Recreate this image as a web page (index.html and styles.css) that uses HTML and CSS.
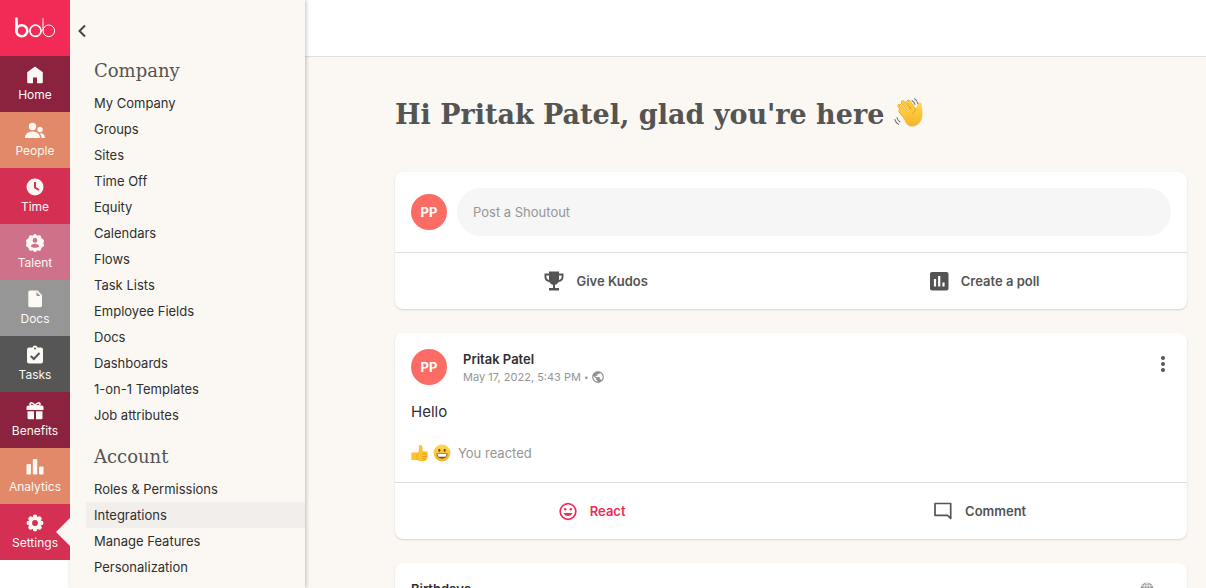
FILE: index.html
```html
<!DOCTYPE html>
<html lang="en">
<head>
  <meta charset="UTF-8">
  <meta name="viewport" content="width=device-width, initial-scale=1.0">
  <title>Home | bob</title>
  <link rel="stylesheet" href="styles.css">
</head>
<body>
  <div class="app">
    <nav class="rail" aria-label="Main">
      <a href="#" class="logo" aria-label="bob">
        <svg width="42" height="22" viewBox="0 0 42 22" fill="none" stroke="#fff">
          <path d="M2.500 1.500v12" stroke-width="2.600" stroke-linecap="round"/>
          <circle cx="7.800" cy="13.800" r="5.500" stroke-width="2.600"/>
          <circle cx="21.500" cy="13.800" r="5.600" stroke-width="1.700"/>
          <circle cx="34.800" cy="13.800" r="5.800" stroke-width="1"/>
          <path d="M29 1.500v12.300" stroke-width="1" stroke-linecap="round"/>
        </svg>
      </a>
      <a href="#" class="rail-item wine">
        <svg viewBox="0 0 20 20"><path d="M10 1.500 2.200 7.200V17q0 1.200 1.200 1.200H8V12.500h4v5.700h4.600q1.200 0 1.200-1.200V7.200z"/></svg>
        <span>Home</span>
      </a>
      <a href="#" class="rail-item orange">
        <svg viewBox="0 0 20 20"><circle cx="7.500" cy="5.500" r="3.700"/><path d="M0 17c0-4 3-6.500 7.500-6.500S15 13 15 17z"/><circle cx="15" cy="8.500" r="2.700"/><path d="M14.500 12.200c3.500-.4 5.500 1.600 5.500 4.800h-3.500c0-2-.7-3.600-2-4.800z"/></svg>
        <span>People</span>
      </a>
      <a href="#" class="rail-item red">
        <svg viewBox="0 0 20 20"><circle cx="10" cy="10" r="8.500"/><path class="cut" d="M10 5v5.500l4 2.500"/></svg>
        <span>Time</span>
      </a>
      <a href="#" class="rail-item pink">
        <svg viewBox="0 0 20 20"><path d="M10 1.200 12.300 3l2.900-.2.900 2.700 2.500 1.600L17.900 10l.7 2.900-2.500 1.600-.9 2.700-2.900-.2-2.300 1.800L7.700 17l-2.900.2-.9-2.700-2.500-1.600.7-2.900-.7-2.900 2.500-1.600.9-2.700 2.900.2z" stroke="#fcf8f3" stroke-linejoin="round"/><circle cx="10" cy="7.400" r="2.300" class="hole"/><path class="hole" d="M5.800 13.500c.4-1.800 2-2.700 4.200-2.700s3.800.9 4.200 2.700c-2.400 1.800-6 1.800-8.400 0z"/></svg>
        <span>Talent</span>
      </a>
      <a href="#" class="rail-item gray">
        <svg viewBox="0 0 20 20"><path d="M5 1.500h7.500l4.500 4.500v10.500q0 1.700-1.700 1.700H5q-1.700 0-1.700-1.700v-13.300Q3.300 1.500 5 1.500z"/><path class="hole" d="M11.500 3v4h4z"/></svg>
        <span>Docs</span>
      </a>
      <a href="#" class="rail-item dark">
        <svg viewBox="0 0 20 20"><rect x="2" y="2.500" width="16" height="16" rx="2"/><circle cx="10" cy="3" r="2.500"/><circle cx="10" cy="3.500" r="1" class="hole"/><path class="cut" d="m5.800 11 3 3 5.700-6"/></svg>
        <span>Tasks</span>
      </a>
      <a href="#" class="rail-item wine">
        <svg viewBox="0 0 20 20"><path d="M3 4.500h14q1.500 0 1.500 1.500v3h-17V6q0-1.500 1.500-1.500zM2.500 10.200H9v8H4q-1.500 0-1.500-1.500zM11 10.200h6.500v6.500q0 1.500-1.500 1.500h-5z"/><path d="M10 5C9 1.500 4.500.800 5 3.500 5.200 5 7.500 5 10 5c2.500 0 4.800 0 5-1.500.5-2.700-4-2-5 1.500z" fill="none" stroke="#fcf8f3" stroke-width="1.600"/></svg>
        <span>Benefits</span>
      </a>
      <a href="#" class="rail-item orange">
        <svg viewBox="0 0 20 20"><rect x="1.500" y="7" width="4.500" height="10.500" rx="1"/><rect x="7.800" y="2" width="4.500" height="15.500" rx="1"/><rect x="14" y="9.500" width="4.500" height="8" rx="1"/></svg>
        <span>Analytics</span>
      </a>
      <a href="#" class="rail-item red active">
        <svg viewBox="0 0 20 20"><g stroke="#fcf8f3" stroke-width="4.600" stroke-linecap="round"><path d="M10 3.800v12.400M3.800 10h12.400M5.600 5.600l8.800 8.800M14.400 5.600l-8.800 8.800"/></g><circle cx="10" cy="10" r="2.900" class="hole"/></svg>
        <span>Settings</span>
      </a>
    </nav>

    <aside class="panel">
      <button type="button" class="collapse-btn" aria-label="Collapse menu">
        <svg width="8" height="14" viewBox="0 0 8 14"><path d="M7 1.500 1.500 7 7 12.500" fill="none" stroke="#444" stroke-width="2"/></svg>
      </button>
      <section class="menu-group">
        <h2>Company</h2>
        <ul>
          <li><a href="#">My Company</a></li>
          <li><a href="#">Groups</a></li>
          <li><a href="#">Sites</a></li>
          <li><a href="#">Time Off</a></li>
          <li><a href="#">Equity</a></li>
          <li><a href="#">Calendars</a></li>
          <li><a href="#">Flows</a></li>
          <li><a href="#">Task Lists</a></li>
          <li><a href="#">Employee Fields</a></li>
          <li><a href="#">Docs</a></li>
          <li><a href="#">Dashboards</a></li>
          <li><a href="#">1-on-1 Templates</a></li>
          <li><a href="#">Job attributes</a></li>
        </ul>
      </section>
      <section class="menu-group">
        <h2>Account</h2>
        <ul>
          <li><a href="#">Roles &amp; Permissions</a></li>
          <li><a href="#" class="selected">Integrations</a></li>
          <li><a href="#">Manage Features</a></li>
          <li><a href="#">Personalization</a></li>
        </ul>
      </section>
    </aside>

    <div class="page">
      <header class="topbar"></header>
      <main class="feed">
        <h1 class="greeting">Hi Pritak Patel, glad you're here
          <!-- waving hand -->
          <svg class="wave" width="30" height="30" viewBox="0 0 30 30" role="img" aria-label="Waving hand">
            <defs>
              <linearGradient id="skin" x1="0" y1="0" x2="0" y2="1"><stop offset="0" stop-color="#ffd84d"/><stop offset="1" stop-color="#f5b32a"/></linearGradient>
            </defs>
            <!-- fingers, then palm with the thumb -->
            <path d="m6.500 13 7 8M5.500 8l9 10.500M9 4.500l9 11M14.500 4l6.500 9" fill="none" stroke="#e0981f" stroke-width="4.200" stroke-linecap="round"/>
            <path d="m6.500 13 7 8M5.500 8l9 10.500M9 4.500l9 11M14.500 4l6.500 9" fill="none" stroke="#fdcb3c" stroke-width="3.200" stroke-linecap="round"/>
            <path d="M9.500 20c-1-2 9-12 12-9 1.200-1.300 1.800-2.900 2.200-4.700.5-2.600 4.200-2.200 4 .5-.1 2.200.8 5 .8 9 0 7.500-4.500 12.700-10.500 12.700-4 0-6.500-3.500-8.500-8.500z" fill="url(#skin)"/>
            <path d="M21.500 11c-.5 2.500-2.200 3.500-3.200 5" fill="none" stroke="#dc961d" stroke-width=".8" stroke-linecap="round"/>
            <path d="M18 2.500c1.500.8 2.500 2.300 3 4M20.500.800c1.700 1 2.900 2.800 3.300 4.800M3 19.500c.4 2 1.400 3.500 3 4.500M.8 21.500c.6 2.200 1.800 3.800 3.700 4.800" fill="none" stroke="#777" stroke-width="1.100" stroke-linecap="round"/>
          </svg>
        </h1>

        <section class="card">
          <div class="composer">
            <span class="avatar">PP</span>
            <input type="text" class="shoutout" placeholder="Post a Shoutout" aria-label="Post a Shoutout">
          </div>
          <div class="actions">
            <button type="button">
              <svg viewBox="0 0 24 24"><path d="M7 2.500h10v2h4.500v3.500c0 3-2 4.700-4.900 5-.8 1.500-2 2.400-3.600 2.800V19h4v2.500H7V19h4v-3.200c-1.600-.4-2.800-1.300-3.600-2.800-2.900-.3-4.900-2-4.900-5V4.500H7zM4.400 6.400V8c0 1.500.9 2.500 2.600 2.900V6.400zM17 6.400v4.500c1.700-.4 2.600-1.400 2.600-2.900V6.400z"/></svg>
              Give Kudos
            </button>
            <button type="button">
              <svg viewBox="0 0 24 24"><rect x="3" y="3" width="18.500" height="18.500" rx="2"/><path d="M8 10v7.500M12.200 7v10.500M16.500 13.500v4" stroke="#fff" stroke-width="2.200"/></svg>
              Create a poll
            </button>
          </div>
        </section>

        <article class="card">
          <div class="post">
            <div class="post-head">
              <span class="avatar">PP</span>
              <div class="author">
                <div class="name">Pritak Patel</div>
                <div class="meta">May 17, 2022, 5:43 PM <span class="dot">•</span>
                  <svg width="14" height="14" viewBox="0 0 24 24"><path d="M12 2C6.480 2 2 6.480 2 12s4.480 10 10 10 10-4.480 10-10S17.520 2 12 2zm-1 17.930c-3.950-.49-7-3.850-7-7.930 0-.62.080-1.210.210-1.790L9 15v1c0 1.100.9 2 2 2v1.930zm6.900-2.540c-.26-.81-1-1.390-1.900-1.390h-1v-3c0-.55-.45-1-1-1H8v-2h2c.55 0 1-.45 1-1V7h2c1.100 0 2-.9 2-2v-.41c2.930 1.190 5 4.060 5 7.410 0 2.080-.8 3.970-2.100 5.390z" fill="#8f8f8f"/></svg>
                </div>
              </div>
              <button type="button" class="more-btn" aria-label="More options">
                <svg width="4" height="18" viewBox="0 0 4 18" fill="#555"><circle cx="2" cy="3" r="2"/><circle cx="2" cy="9" r="2"/><circle cx="2" cy="15" r="2"/></svg>
              </button>
            </div>
            <p class="message">Hello</p>
            <div class="reactions">
              <svg width="18" height="18" viewBox="0 0 18 18" role="img" aria-label="Thumbs up">
                <path d="M1 8.500h6C8.500 6.500 8 4 7.800 2.500 7.700.800 10 .300 11 2c1 1.800.7 3.500.3 5.300h3.900c1.800 0 2 2 1 2.700 1 .6.900 2-.1 2.500.7.700.5 2-.6 2.300.4 1-.2 2-1.500 2.100H8.500L6 16H1.200Q.3 16 .3 15V9.500q0-1 .7-1z" fill="#fcc32d"/>
                <path d="M11.500 10h4.500M11.500 12.500H16M11.300 14.900h4" stroke="#d98f1b" stroke-width=".8"/><path d="M6 9v6.500" stroke="#f0a82a"/>
              </svg>
              <svg width="18" height="18" viewBox="0 0 18 18" role="img" aria-label="Grinning face">
                <circle cx="9" cy="9" r="8.400" fill="url(#skin)"/>
                <ellipse cx="6.300" cy="6.300" rx="1" ry="1.500" fill="#6b4310"/><ellipse cx="11.700" cy="6.300" rx="1" ry="1.500" fill="#6b4310"/>
                <path d="M3.500 9.500h11c0 3-2.200 5-5.500 5s-5.500-2-5.500-5z" fill="#80511a"/><path d="M4.300 10h9.400l-1 2.700H5.300z" fill="#fff"/>
              </svg>
              <span>You reacted</span>
            </div>
          </div>
          <div class="actions">
            <button type="button" class="reacted">
              <svg viewBox="0 0 24 24"><circle cx="12" cy="12.500" r="7.800" fill="none" stroke="currentColor" stroke-width="1.700"/><circle cx="9.200" cy="10.300" r="1.200"/><circle cx="14.800" cy="10.300" r="1.200"/><path d="M7.700 14h8.600c-.7 1.900-2.200 3-4.300 3s-3.600-1.100-4.300-3z"/></svg>
              React
            </button>
            <button type="button">
              <svg viewBox="0 0 24 24"><path d="M4 4.500h15.700v15l-3.200-3.200H4z" fill="none" stroke="currentColor" stroke-width="1.700" stroke-linejoin="round"/></svg>
              Comment
            </button>
          </div>
        </article>

        <section class="card">
          <div class="birthdays">
            <h3>Birthdays</h3>
            <svg width="14" height="14" viewBox="0 0 14 14" fill="#949494"><circle cx="7" cy="7" r="6.500"/><g fill="none" stroke="#fff" stroke-width=".8"><ellipse cx="7" cy="7" rx="3" ry="6.300"/><path d="M7 .5v13M.5 7h13M1.500 3.800h11M1.500 10.200h11"/></g></svg>
          </div>
        </section>
      </main>
    </div>
  </div>
</body>
</html>
```

FILE: styles.css
```css
* {
  box-sizing: border-box;
}
body {
  margin: 0;
  font-family: Inter, "Liberation Sans", sans-serif;
  font-size: 13px;
  color: #2f2f2f;
  background: #fff;
}
a {
  color: inherit;
  text-decoration: none;
}
button {
  font: inherit;
  color: inherit;
  background: none;
  border: none;
  padding: 0;
  cursor: pointer;
}
h1, h2, h3, p, ul {
  margin: 0;
  padding: 0;
}
.app {
  display: flex;
  height: 100vh;
  overflow: hidden;
}

/* icon rail */
.rail {
  position: relative;
  z-index: 2;
  width: 70px;
  flex-shrink: 0;
}
.logo {
  display: flex;
  height: 56px;
  align-items: center;
  justify-content: center;
  background: #f12b55;
}
.rail-item {
  --tile: #d52f53;
  position: relative;
  display: flex;
  flex-direction: column;
  align-items: center;
  height: 56px;
  padding-top: 9px;
  background: var(--tile);
  color: #fcf8f3;
  font-size: 12px;
  line-height: 16px;
}
.rail-item svg {
  width: 20px;
  height: 20px;
  margin-bottom: 2px;
  fill: #fcf8f3;
}
.rail-item .hole {
  fill: var(--tile);
}
.rail-item .cut {
  fill: none;
  stroke: var(--tile);
  stroke-width: 2;
}
.wine { --tile: #8b223e; }
.orange { --tile: #e18968; }
.pink { --tile: #cf7289; }
.gray { --tile: #969696; }
.dark { --tile: #565656; }
.rail-item.active::after {
  content: "";
  position: absolute;
  right: 0;
  top: 14px;
  border: 14px solid transparent;
  border-left-width: 0;
  border-right-color: #fbf8f3;
}

/* settings menu */
.panel {
  position: relative;
  z-index: 1;
  width: 235px;
  flex-shrink: 0;
  padding: 24px 0 0 16px;
  background: #fbf8f3;
  box-shadow: 1px 0 4px rgba(0, 0, 0, 0.25);
}
.collapse-btn {
  display: block;
  width: 16px;
  height: 14px;
  margin: 0 0 18px -12px;
}
.collapse-btn svg {
  display: block;
  margin: 0 auto;
}
.menu-group {
  margin-bottom: 14px;
}
.menu-group h2 {
  padding-left: 8px;
  margin-bottom: 4px;
  font: 18px/30px "DejaVu Serif", serif;
  color: #545454;
}
.menu-group ul {
  list-style: none;
}
.menu-group a {
  display: block;
  padding-left: 8px;
  line-height: 26px;
}
.menu-group a.selected {
  background: #f2eeeb;
}

/* page */
.page {
  flex: 1;
  min-width: 0;
  background: #fbf8f3;
}
.topbar {
  height: 57px;
  background: #fff;
  border-bottom: 1px solid #dedede;
}
.feed {
  padding: 38px 19px 0 90px;
}
.greeting {
  margin-bottom: 37px;
  font: bold 27px/40px "DejaVu Serif", serif;
  color: #545454;
  white-space: nowrap;
}
.wave {
  vertical-align: -4px;
}
.card {
  margin-bottom: 24px;
  background: #fff;
  border-radius: 8px;
  box-shadow: 0 1px 2px rgba(0, 0, 0, 0.15);
}
.avatar {
  display: flex;
  flex-shrink: 0;
  width: 36px;
  height: 36px;
  align-items: center;
  justify-content: center;
  border-radius: 50%;
  background: #fc6c64;
  color: #fff;
  font-weight: 700;
}
.composer {
  display: flex;
  align-items: center;
  gap: 10px;
  padding: 16px;
}
.shoutout {
  flex: 1;
  min-width: 0;
  height: 48px;
  padding: 0 16px;
  border: none;
  border-radius: 24px;
  background: #f6f6f6;
  font: inherit;
}
.shoutout::placeholder {
  color: #959595;
}
.actions {
  display: flex;
  justify-content: space-around;
  padding: 0 8px;
  border-top: 1px solid #dedede;
}
.actions button {
  display: flex;
  align-items: center;
  gap: 10px;
  height: 56px;
  font-weight: 600;
  color: #545454;
}
.actions button.reacted {
  color: #ee2c56;
}
.actions svg {
  width: 24px;
  height: 24px;
  fill: currentColor;
}
.post {
  padding: 16px 16px 18px;
}
.post-head {
  display: flex;
  align-items: center;
  gap: 16px;
}
.author {
  flex: 1;
}
.name {
  font-weight: 600;
  line-height: 20px;
}
.meta {
  display: flex;
  align-items: center;
  gap: 3px;
  font-size: 11px;
  line-height: 16px;
  color: #959595;
}
.meta .dot {
  font-size: 8px;
}
.more-btn {
  width: 16px;
  height: 24px;
  padding-bottom: 4px;
}
.message {
  margin-top: 15px;
  font-size: 15px;
  line-height: 24px;
}
.reactions {
  display: flex;
  align-items: center;
  gap: 4px;
  margin-top: 18px;
  line-height: 22px;
  color: #959595;
}
.reactions span {
  margin-left: 3px;
}
.birthdays {
  display: flex;
  align-items: center;
  justify-content: space-between;
  padding: 16px 33px 16px 16px;
}
.birthdays h3 {
  font-size: 13px;
  font-weight: 600;
  line-height: 20px;
}
```
